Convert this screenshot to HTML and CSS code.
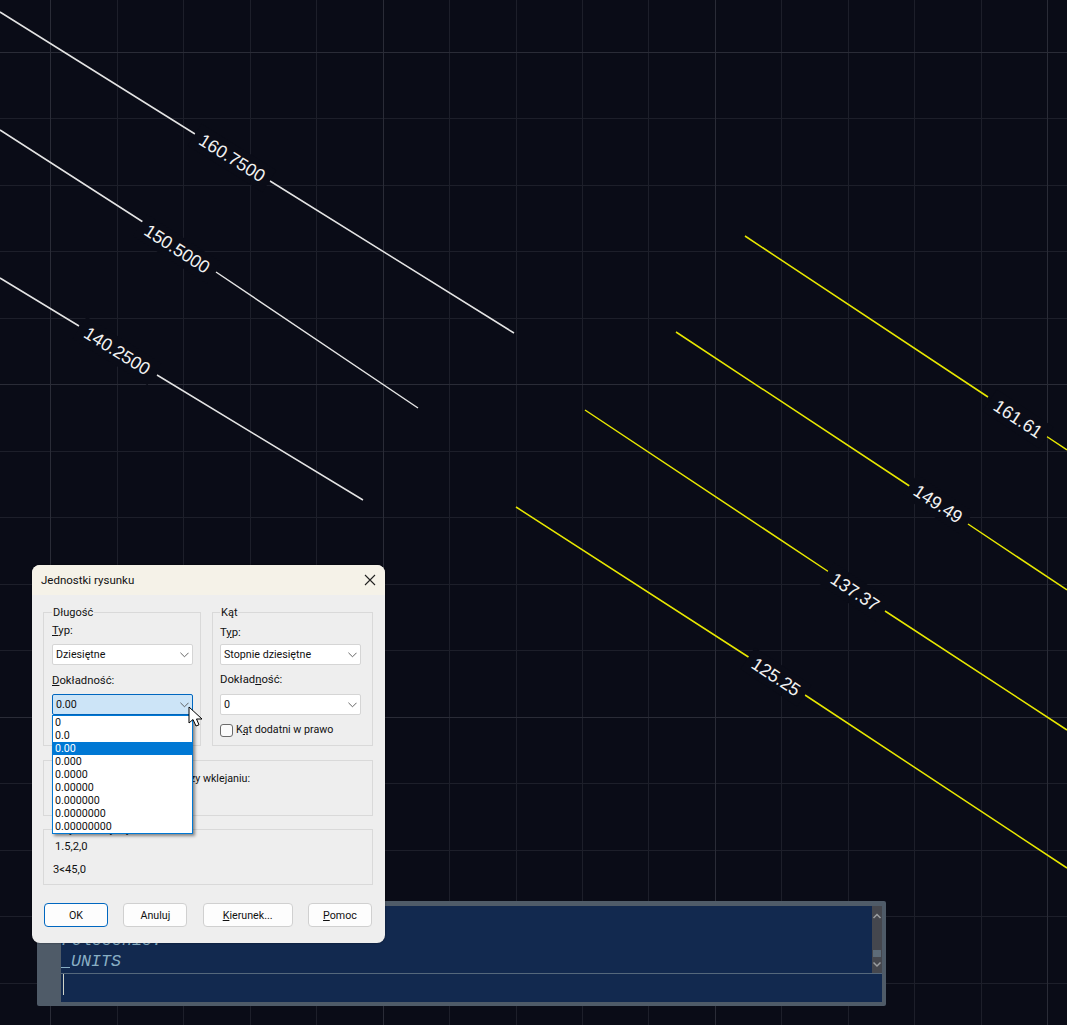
FILE: index.html
```html
<!DOCTYPE html>
<html lang="pl">

<head>
     <meta charset="UTF-8">
     <meta name="viewport" content="width=device-width, initial-scale=1.0">
     <title>Jednostki rysunku</title>
     <link rel="stylesheet" href="styles.css">
</head>

<body>
     <div class="canvas">
          <svg class="drawing" width="1067" height="1025" viewBox="0 0 1067 1025">
               <path class="gridMinor" d="M117 0V1025M183 0V1025M250 0V1025M316 0V1025M449 0V1025M516 0V1025M582 0V1025M648 0V1025M781 0V1025M848 0V1025M914 0V1025M981 0V1025M0 118H1067M0 185H1067M0 251H1067M0 318H1067M0 451H1067M0 517H1067M0 584H1067M0 650H1067M0 783H1067M0 850H1067M0 916H1067M0 983H1067" />
               <path class="gridMajor" d="M50 0V1025M383 0V1025M715 0V1025M1047 0V1025M0 52H1067M0 384H1067M0 717H1067" />

               <path class="contourWhite" d="M0 12L195 134M270 181L514 333M0 130L143 222M216 272L418 408M0 278L79 326M157 375L363 500" />
               <path class="contourYellow" d="M745 236L988 397M1046 436L1067 450M676 332L911 487M968 524L1067 590M585 410L829 572M885 611L1067 730M516 507L750 658M805 695L1067 868" />

               <g transform="translate(232 158) rotate(32)"><rect class="labelBack" x="-44" y="-13" width="88" height="26" /><text class="label" y="6">160.7500</text></g>
               <g transform="translate(177 249) rotate(33)"><rect class="labelBack" x="-44" y="-13" width="88" height="26" /><text class="label" y="6">150.5000</text></g>
               <g transform="translate(117 351) rotate(32)"><rect class="labelBack" x="-44" y="-13" width="88" height="26" /><text class="label" y="6">140.2500</text></g>
               <g transform="translate(1018 419) rotate(33.5)"><rect class="labelBack" x="-34" y="-13" width="68" height="26" /><text class="label" y="6">161.61</text></g>
               <g transform="translate(938 504) rotate(33.5)"><rect class="labelBack" x="-34" y="-13" width="68" height="26" /><text class="label" y="6">149.49</text></g>
               <g transform="translate(855 592) rotate(33.5)"><rect class="labelBack" x="-34" y="-13" width="68" height="26" /><text class="label" y="6">137.37</text></g>
               <g transform="translate(776 677) rotate(33.5)"><rect class="labelBack" x="-34" y="-13" width="68" height="26" /><text class="label" y="6">125.25</text></g>
          </svg>

          <div class="commandWindow">
               <div class="commandHistory">
                    <div class="commandLines">
                         <p class="commandPrev">Polecenie:</p>
                         <p class="commandLine"><span class="commandMark"></span>UNITS</p>
                    </div>
                    <div class="commandScroll">
                         <svg width="10" height="8" viewBox="0 0 10 8"><path d="M1.500 6L5 2.500L8.500 6" /></svg>
                         <div class="scrollSpacer"></div>
                         <div class="scrollThumb"></div>
                         <svg width="10" height="8" viewBox="0 0 10 8"><path d="M1.500 2.500L5 6L8.500 2.500" /></svg>
                    </div>
               </div>
               <div class="commandInput"><span class="caret"></span></div>
          </div>

          <div class="dialog">
               <div class="dialogTitle">
                    <span>Jednostki rysunku</span>
                    <svg width="12" height="12" viewBox="0 0 12 12"><path d="M1 1L11 11M11 1L1 11" /></svg>
               </div>
               <div class="dialogBody">
                    <div class="groupRow">
                         <div class="group groupLength">
                              <span class="groupTitle">Długość</span>
                              <label class="fieldLabel"><u>T</u>yp:</label>
                              <div class="combo">
                                   <span>Dziesiętne</span>
                                   <svg width="9" height="6" viewBox="0 0 10 6"><path d="M0.500 0.500L5 5L9.500 0.500" /></svg>
                              </div>
                              <label class="fieldLabel"><u>D</u>okładność:</label>
                              <div class="combo comboOpen">
                                   <span>0.00</span>
                                   <svg width="9" height="6" viewBox="0 0 10 6"><path d="M0.500 0.500L5 5L9.500 0.500" /></svg>
                              </div>
                         </div>
                         <div class="group groupAngle">
                              <span class="groupTitle">Kąt</span>
                              <label class="fieldLabel fieldLabelLow">T<u>y</u>p:</label>
                              <div class="combo">
                                   <span>Stopnie dziesiętne</span>
                                   <svg width="9" height="6" viewBox="0 0 10 6"><path d="M0.500 0.500L5 5L9.500 0.500" /></svg>
                              </div>
                              <label class="fieldLabel">Dokład<u>n</u>ość:</label>
                              <div class="combo">
                                   <span>0</span>
                                   <svg width="9" height="6" viewBox="0 0 10 6"><path d="M0.500 0.500L5 5L9.500 0.500" /></svg>
                              </div>
                              <div class="checkRow">
                                   <span class="checkBox"></span>
                                   <span>K<u>ą</u>t dodatni w prawo</span>
                              </div>
                         </div>
                    </div>
                    <div class="group groupScale">
                         <p>Jednostki do skalowania przy wklejaniu:</p>
                    </div>
                    <div class="group groupSample">
                         <span class="groupTitle">Przykładowy wynik</span>
                         <p class="sampleOne">1.5,2,0</p>
                         <p>3&lt;45,0</p>
                    </div>
                    <div class="buttons">
                         <button class="btn btnDefault">OK</button>
                         <button class="btn">Anuluj</button>
                         <button class="btn btnWide"><u>K</u>ierunek...</button>
                         <button class="btn"><u>P</u>omoc</button>
                    </div>
               </div>

               <ul class="dropList">
                    <li>0</li>
                    <li>0.0</li>
                    <li class="selected">0.00</li>
                    <li>0.000</li>
                    <li>0.0000</li>
                    <li>0.00000</li>
                    <li>0.000000</li>
                    <li>0.0000000</li>
                    <li>0.00000000</li>
               </ul>

               <svg class="pointer" width="16" height="22" viewBox="0 0 16 22">
                    <path d="M1 1V17L5 13.500L8 20L11 18.800L8.500 13H14Z" />
               </svg>
          </div>
     </div>
</body>

</html>
```

FILE: styles.css
```css
* {
     margin: 0px;
     padding: 0px;
     box-sizing: border-box;
}

body {
     background-color: #0a0c17;
     overflow: hidden;
}

.canvas {
     position: relative;
     width: 1067px;
     height: 1025px;
     background-color: #0a0c17;
}

/* drawing area */
.drawing {
     position: absolute;
     left: 0px;
     top: 0px;
}

.gridMinor,
.gridMajor {
     fill: none;
     stroke-width: 1;
     shape-rendering: crispEdges;
}

.gridMinor {
     stroke: #1d1f2a;
}

.gridMajor {
     stroke: #2a2c37;
}

.contourWhite,
.contourYellow {
     fill: none;
     stroke-width: 1.5;
}

.contourWhite {
     stroke: #e4e4e4;
}

.contourYellow {
     stroke: #e8e800;
}

.labelBack {
     fill: #0a0c17;
}

.label {
     fill: #f2f2f2;
     font-family: "Liberation Sans", Arial, sans-serif;
     font-size: 17.8px;
     text-anchor: middle;
}

/* command line */
.commandWindow {
     position: absolute;
     left: 37px;
     top: 901px;
     width: 849px;
     height: 105px;
     padding: 5px 4px 4px 24px;
     background-color: #4f5b68;
     border-radius: 2px;
     display: flex;
     flex-direction: column;
}

.commandHistory {
     display: flex;
     height: 68px;
     background-color: #12294f;
     border-bottom: 1px solid #55687c;
}

.commandLines {
     flex: 1;
     display: flex;
     flex-direction: column;
     justify-content: flex-end;
     font-family: "Liberation Mono", monospace;
     font-size: 16.67px;
     font-style: italic;
     line-height: 23px;
     color: #88aec4;
}

.commandLine,
.commandPrev {
     white-space: pre;
}

.commandPrev {
     padding-left: 1px;
     margin-bottom: -2px;
}

.commandMark {
     display: inline-block;
     width: 9px;
     height: 1px;
     margin-right: 1px;
     background-color: #88aec4;
     vertical-align: -2px;
}

.commandScroll {
     width: 10px;
     background-color: #45474e;
     display: flex;
     flex-direction: column;
     align-items: center;
     padding: 6px 0px 5px;

     svg {
          fill: none;
          stroke: #9a9da0;
          stroke-width: 1.500;
     }
}

.scrollSpacer {
     flex: 1;
}

.scrollThumb {
     width: 8px;
     height: 7px;
     background-color: #5d6b78;
     margin-bottom: 3px;
}

.commandInput {
     flex: 1;
     background-color: #12294f;
     padding: 0px 2px;
}

.caret {
     display: block;
     width: 1px;
     height: 21px;
     background-color: #cfd3c8;
}

/* dialog */
.dialog {
     position: absolute;
     left: 32px;
     top: 565px;
     width: 353px;
     height: 378px;
     background-color: #eeeeee;
     border-radius: 8px;
     box-shadow: 0px 0px 2px rgba(0, 0, 0, 0.5);
     font-family: Roboto, "Liberation Sans", sans-serif;
     font-size: 10.7px;
     line-height: 14px;
     color: #111;
}

.dialogTitle {
     height: 30px;
     padding: 0px 9px 0px 9px;
     background-color: #f5f2e8;
     border-radius: 8px 8px 0px 0px;
     font-size: 11.5px;
     display: flex;
     justify-content: space-between;
     align-items: center;

     svg {
          fill: none;
          stroke: #222;
          stroke-width: 1.100;
     }
}

.dialogBody {
     padding: 17px 12px 0px 11px;
     display: flex;
     flex-direction: column;
}

.groupRow {
     display: grid;
     grid-template-columns: 158px 161px;
     gap: 11px;
}

.group {
     position: relative;
     border: 1px solid #d9d9d9;
}

.groupTitle {
     position: absolute;
     left: 8px;
     top: -7px;
     padding: 0px 1px;
     background-color: #eeeeee;
     font-size: 11px;
}

.groupLength,
.groupAngle {
     height: 134px;
     padding: 11px 7px 0px 8px;
}

.groupAngle {
     padding-left: 7px;
     padding-right: 11px;

     .groupTitle {
          left: 7px;
     }

     .fieldLabel {
          margin-bottom: 7px;
     }

     .fieldLabelLow {
          padding-top: 2px;
          height: 16px;
          margin-bottom: 4px;
     }

     .combo {
          margin-bottom: 8px;
     }
}

.fieldLabel {
     display: block;
     margin-bottom: 6px;
     font-size: 11.3px;
}

.combo {
     height: 21px;
     padding: 1px 3px 0px 3px;
     margin-bottom: 9px;
     background-color: #fff;
     border: 1px solid #d5d5d5;
     border-radius: 2px;
     display: flex;
     justify-content: space-between;
     align-items: center;

     svg {
          fill: none;
          stroke: #555;
          stroke-width: 1;
     }
}

.comboOpen {
     background-color: #cce4f7;
     border-color: #0067c0;
}

.checkRow {
     display: flex;
     align-items: center;
     gap: 3px;
     margin-top: 6px;
}

.checkBox {
     width: 13px;
     height: 13px;
     background-color: #fbfbfb;
     border: 1px solid #6b6b6b;
     border-radius: 3px;
}

.groupScale {
     height: 56px;
     margin-top: 14px;
     padding: 11px 16px;
}

.groupSample {
     height: 56px;
     margin-top: 13px;
     padding: 10px 9px;
     font-size: 11.2px;
}

.sampleOne {
     padding-left: 2px;
     margin-bottom: 9px;
}

.buttons {
     display: flex;
     justify-content: space-between;
     margin-top: 18px;
     padding: 0px 1px;
}

.btn {
     width: 64px;
     height: 24px;
     padding-top: 1px;
     background-color: #fdfdfd;
     border: 1px solid #d0d0d0;
     border-radius: 4px;
     font: inherit;
     color: inherit;
}

.btnWide {
     width: 90px;
}

.btnDefault {
     border-color: #0067c0;
}

/* opened list of the precision combo */
.dropList {
     position: absolute;
     left: 20px;
     top: 150px;
     width: 141px;
     height: 119px;
     list-style: none;
     background-color: #fff;
     border: 1px solid #0078d4;
     box-shadow: 2px 2px 3px rgba(0, 0, 0, 0.45);
     line-height: 13px;

     li {
          height: 13px;
          padding-left: 2px;
     }

     .selected {
          background-color: #0078d4;
          color: #fff;
     }
}

.pointer {
     position: absolute;
     left: 156px;
     top: 141px;
     fill: #fff;
     stroke: #000;
     stroke-width: 1;
}
```
